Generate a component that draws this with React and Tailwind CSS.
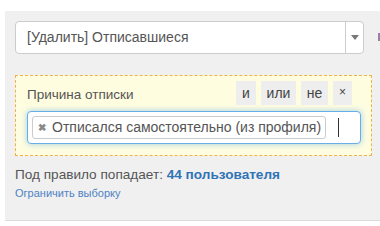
export default function App() {
  return (
    <div className="w-[380px] h-[226px] bg-white overflow-hidden relative" style={{ fontFamily: '"Liberation Sans", Arial, sans-serif' }}>
      <div className="absolute left-[378px] top-[33px] w-[2px] h-[8px] bg-[#9b7fa8]" />
      <div className="mt-[11px] ml-[5px] h-[210px] bg-[#f0f0f0] border-b border-[#dcdcdc] px-[10px] pt-[10px]">
        <div className="w-[349px] h-[33px] bg-white border border-[#cccccc] rounded-[4px] flex items-center">
          <div className="flex-1 pl-[11px] text-[14px] text-[#555555]">[Удалить] Отписавшиеся</div>
          <div className="w-[18px] h-full border-l border-[#cccccc] flex items-center justify-center">
            <div className="w-0 h-0 border-l-[4px] border-r-[4px] border-t-[5px] border-l-transparent border-r-transparent border-t-[#777777]" />
          </div>
        </div>
        <div className="mt-[21px] w-[357px] h-[81px] bg-[#fefde0] border border-dashed border-[#f0b04a] pl-[11px] pr-[10px] pt-[5px]">
          <div className="flex items-center">
            <div className="flex-1 text-[13.5px] text-[#555555] pt-[4px]">Причина отписки</div>
            <div className="flex gap-[5px] mr-[9px]">
              <div className="h-[24px] w-[20px] bg-[#eeeeee] flex items-center justify-center text-[14px] text-[#444]">и</div>
              <div className="h-[24px] w-[35px] bg-[#eeeeee] flex items-center justify-center text-[14px] text-[#444]">или</div>
              <div className="h-[24px] w-[27px] bg-[#eeeeee] flex items-center justify-center text-[14px] text-[#444]">не</div>
              <div className="h-[24px] w-[19px] bg-[#eeeeee] flex items-center justify-center text-[12px] text-[#444] pb-[3px]">×</div>
            </div>
          </div>
          <div className="mt-[6px] w-[334px] h-[33px] bg-white border border-[#66afe9] rounded-[4px] shadow-[0_0_6px_rgba(102,175,233,0.6)] flex items-center pl-[4px]">
            <div className="h-[23px] w-[294px] border border-[#cccccc] rounded-[3px] flex items-center pl-[5px] bg-white">
              <span className="text-[10px] text-[#888] mr-[6px] font-bold">✖</span>
              <span className="text-[14px] text-[#555555]">Отписался самостоятельно (из профиля)</span>
            </div>
            <div className="ml-[12px] w-[1px] h-[19px] bg-[#333]" />
          </div>
        </div>
        <div className="mt-[9px] text-[13.6px] text-[#555555]">
          Под правило попадает: <span className="font-bold text-[#2f73b6]">44 пользователя</span>
        </div>
        <div className="mt-0 text-[11px] text-[#4f82c4]">Ограничить выборку</div>
      </div>
    </div>
  );
}
